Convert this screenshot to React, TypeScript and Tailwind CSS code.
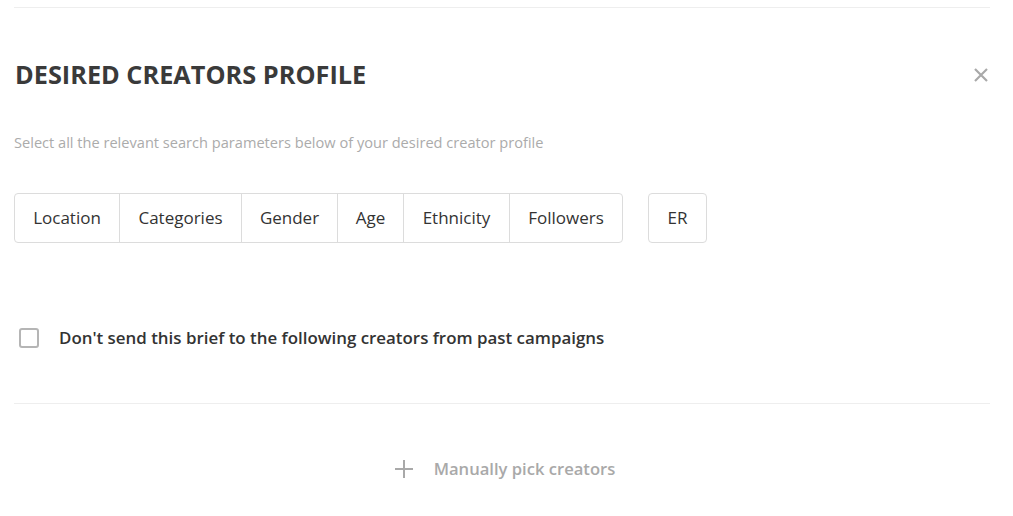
import React from "react";

const segs = [
  { label: "Location", w: "w-[104px]" },
  { label: "Categories", w: "w-[122px]" },
  { label: "Gender", w: "w-[96px]" },
  { label: "Age", w: "w-[66px]" },
  { label: "Ethnicity", w: "w-[106px]" },
  { label: "Followers", w: "w-[113px]" },
];

export default function App() {
  return (
    <div className="bg-white w-[1013px] h-[516px] overflow-hidden font-['Open_Sans',sans-serif]">
      <div className="ml-[14px] w-[976px]">
        <div className="h-[8px] border-b border-[#eeeeee]" />
        <div className="flex items-center justify-between h-[134px]">
          <h1 className="text-[25.3px] font-bold text-[#3a3a3a] leading-none pl-px">DESIRED CREATORS PROFILE</h1>
          <button className="mr-[1px] text-[#a9a9a9]">
            <svg width="16" height="16" viewBox="0 0 16 16" stroke="currentColor" strokeWidth="2.2" strokeLinecap="butt">
              <path d="M2 2L14 14M14 2L2 14" />
            </svg>
          </button>
        </div>
        <p className="text-[14.6px] text-[#ababab] leading-none -mt-[7px]">
          Select all the relevant search parameters below of your desired creator profile
        </p>
        <div className="flex items-center mt-[43px] gap-[25px]">
          <div className="flex h-[50px] border border-[#dcdcdc] rounded-[4px]">
            {segs.map((s, i) => (
              <div
                key={s.label}
                className={`${s.w} flex items-center justify-center text-[17px] text-[#333333] ${i > 0 ? "border-l border-[#dcdcdc]" : ""}`}
              >
                {s.label}
              </div>
            ))}
          </div>
          <div className="w-[59px] h-[50px] border border-[#dcdcdc] rounded-[4px] flex items-center justify-center text-[17px] text-[#333333]">
            ER
          </div>
        </div>
        <div className="flex items-center mt-[85px] h-[20px]">
          <div className="ml-[5px] w-[20px] h-[20px] border-2 border-[#b5b5b5] rounded-[3px]" />
          <span className="ml-[20px] text-[16.9px] font-semibold text-[#333333]">
            Don't send this brief to the following creators from past campaigns
          </span>
        </div>
        <div className="mt-[55px] border-b border-[#eeeeee]" />
        <div className="flex items-center justify-center mt-[53px] text-[#a9a9a9] pl-[6px]">
          <svg width="18" height="18" viewBox="0 0 18 18" stroke="currentColor" strokeWidth="2">
            <path d="M9 0V18M0 9H18" />
          </svg>
          <span className="ml-[21px] text-[16.6px] font-semibold">Manually pick creators</span>
        </div>
      </div>
    </div>
  );
}
